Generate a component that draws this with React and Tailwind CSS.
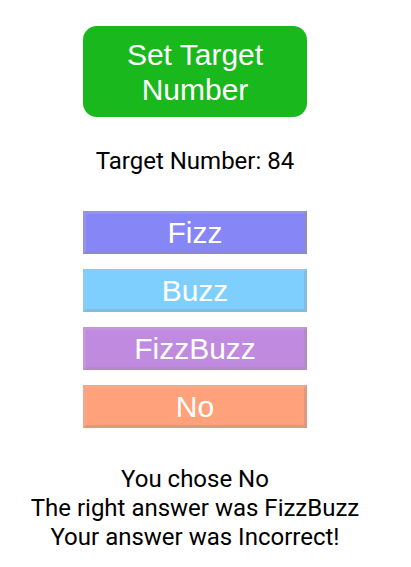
export default function App() {
  const answers = [
    { label: "Fizz", cls: "bg-[#8686f6] border-t-[#9494e4] border-l-[#9494e4] border-b-[#8a8acc] border-r-[#8a8acc]" },
    { label: "Buzz", cls: "bg-[#7fcffe] border-t-[#8ccbee] border-l-[#8ccbee] border-b-[#80bde0] border-r-[#80bde0]" },
    { label: "FizzBuzz", cls: "bg-[#c08ae0] border-t-[#c596da] border-l-[#c596da] border-b-[#b38cc6] border-r-[#b38cc6]" },
    { label: "No", cls: "bg-[#ffa17b] border-t-[#f2a88b] border-l-[#f2a88b] border-b-[#dc9a80] border-r-[#dc9a80]" },
  ];
  return (
    <div className="w-[390px] flex flex-col items-center pt-[26px] bg-white">
      <button className="w-[224px] h-[91px] rounded-[14px] bg-[#19b81d] text-white text-[30px] leading-[35px] font-['Liberation_Sans',Arial,sans-serif] flex items-center justify-center text-center px-2">
        Set Target
        <br />
        Number
      </button>
      <div className="mt-[30px] text-[24px] leading-[28px] text-black font-['Roboto',sans-serif]">
        Target Number: 84
      </div>
      <div className="mt-[36px] flex flex-col gap-[15px]">
        {answers.map((a) => (
          <button
            key={a.label}
            className={
              "w-[224px] h-[43px] border-[3px] border-solid text-white text-[30px] leading-[34px] font-['Liberation_Sans',Arial,sans-serif] flex items-center justify-center " +
              a.cls
            }
          >
            {a.label}
          </button>
        ))}
      </div>
      <div className="mt-[37px] text-center text-black text-[24px] leading-[29px] font-['Roboto',sans-serif]">
        <div>You chose No</div>
        <div>The right answer was FizzBuzz</div>
        <div>Your answer was Incorrect!</div>
      </div>
    </div>
  );
}
